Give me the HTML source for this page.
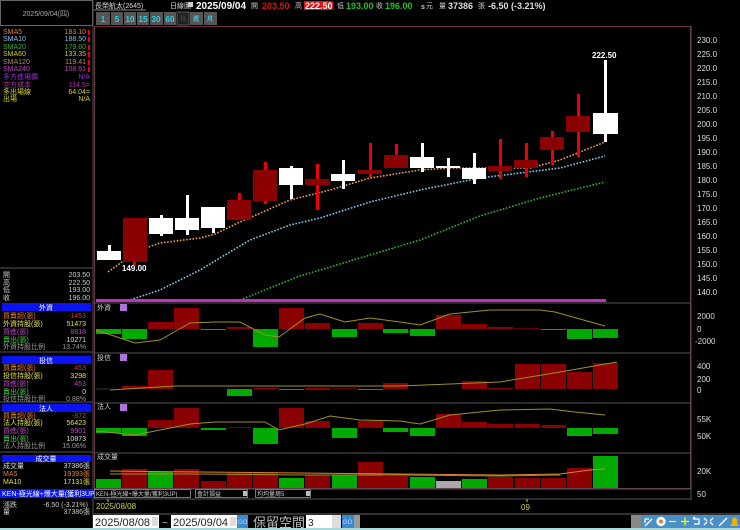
<!DOCTYPE html>
<html><head><meta charset="utf-8"><style>
html,body{margin:0;padding:0;background:#000;width:740px;height:530px;overflow:hidden}
svg{display:block}
text{font-family:"Liberation Sans","Noto Sans CJK TC",sans-serif}
.s{font-size:7px}
.ax{font-size:8px;fill:#ddd}
</style></head><body>
<svg width="740" height="530" viewBox="0 0 740 530" xmlns="http://www.w3.org/2000/svg">
<rect width="740" height="530" fill="#000"/>
<!-- left top date box -->
<rect x="0.5" y="0.5" width="92" height="25" fill="#000" stroke="#666"/>
<text x="46" y="16" class="s" fill="#aaa" text-anchor="middle">2025/09/04(四)</text>
<line x1="93" y1="0" x2="93" y2="530" stroke="#555"/>
<!-- SMA list -->
<g class="s">
<text x="3" y="34" fill="#e08030">SMA5</text><text x="86" y="34" fill="#e08030" text-anchor="end">183.10</text>
<text x="3" y="41" fill="#80c0e0">SMA10</text><text x="86" y="41" fill="#80c0e0" text-anchor="end">188.50</text>
<text x="3" y="49" fill="#30b030">SMA20</text><text x="86" y="49" fill="#30b030" text-anchor="end">179.60</text>
<text x="3" y="56" fill="#d0d020">SMA60</text><text x="86" y="56" fill="#d0d020" text-anchor="end">133.35</text>
<text x="3" y="64" fill="#b09060">SMA120</text><text x="86" y="64" fill="#b09060" text-anchor="end">119.41</text>
<text x="3" y="71" fill="#c040c0">SMA240</text><text x="86" y="71" fill="#c040c0" text-anchor="end">108.61</text>
<text x="3" y="79" fill="#9030d0">多方進場價</text><text x="90" y="79" fill="#9030d0" text-anchor="end">N/A</text>
<text x="3" y="87" fill="#b030b0">空方成本</text><text x="90" y="87" fill="#b030b0" text-anchor="end">114.5=</text>
<text x="3" y="94" fill="#d0d020">多出場線</text><text x="90" y="94" fill="#d0d020" text-anchor="end">64.04=</text>
<text x="3" y="101" fill="#d0d020">出場</text><text x="90" y="101" fill="#d0d020" text-anchor="end">N/A</text>
</g>
<g fill="#e00"><rect x="88" y="30" width="2" height="5"/><rect x="88" y="37" width="2" height="5"/><rect x="88" y="45" width="2" height="5"/><rect x="88" y="52" width="2" height="5"/><rect x="88" y="60" width="2" height="5"/><rect x="88" y="67" width="2" height="5"/></g>
<!-- OHLC -->
<line x1="0" y1="268" x2="93" y2="268" stroke="#555"/>
<g class="s" fill="#ccc">
<text x="3" y="277">開</text><text x="90" y="277" text-anchor="end">203.50</text>
<text x="3" y="285">高</text><text x="90" y="285" text-anchor="end">222.50</text>
<text x="3" y="292">低</text><text x="90" y="292" text-anchor="end">193.00</text>
<text x="3" y="300">收</text><text x="90" y="300" text-anchor="end">196.00</text>
</g>
<!-- foreign -->
<rect x="2" y="303" width="89" height="8" fill="#0a14f0"/>
<text x="46" y="310" class="s" fill="#fff" text-anchor="middle">外資</text>
<g class="s">
<text x="3" y="318" fill="#e08030">買賣超(張)</text><text x="86" y="318" fill="#e03030" text-anchor="end">-1453</text>
<text x="3" y="326" fill="#e0e040">外資持股(張)</text><text x="86" y="326" fill="#e0e040" text-anchor="end">51473</text>
<text x="3" y="334" fill="#c040c0">買進(張)</text><text x="86" y="334" fill="#c040c0" text-anchor="end">8818</text>
<text x="3" y="342" fill="#40d040">賣出(張)</text><text x="86" y="342" fill="#ddd" text-anchor="end">10271</text>
<text x="3" y="349" fill="#999">外資持股比例</text><text x="86" y="349" fill="#999" text-anchor="end">13.74%</text>
</g>
<line x1="0" y1="352" x2="93" y2="352" stroke="#555"/>
<!-- trust -->
<rect x="2" y="356" width="89" height="8" fill="#0a14f0"/>
<text x="46" y="363" class="s" fill="#fff" text-anchor="middle">投信</text>
<g class="s">
<text x="3" y="370" fill="#e08030">買賣超(張)</text><text x="86" y="370" fill="#e03030" text-anchor="end">453</text>
<text x="3" y="378" fill="#e0e040">投信持股(張)</text><text x="86" y="378" fill="#e0e040" text-anchor="end">3298</text>
<text x="3" y="386" fill="#c040c0">買進(張)</text><text x="86" y="386" fill="#c040c0" text-anchor="end">453</text>
<text x="3" y="394" fill="#40d040">賣出(張)</text><text x="86" y="394" fill="#ddd" text-anchor="end">0</text>
<text x="3" y="401" fill="#999">投信持股比例</text><text x="86" y="401" fill="#999" text-anchor="end">0.88%</text>
</g>
<line x1="0" y1="402" x2="93" y2="402" stroke="#555"/>
<!-- inst -->
<rect x="2" y="404" width="89" height="8" fill="#0a14f0"/>
<text x="46" y="411" class="s" fill="#fff" text-anchor="middle">法人</text>
<g class="s">
<text x="3" y="418" fill="#e08030">買賣超(張)</text><text x="86" y="418" fill="#e03030" text-anchor="end">-872</text>
<text x="3" y="425" fill="#e0e040">法人持股(張)</text><text x="86" y="425" fill="#e0e040" text-anchor="end">56423</text>
<text x="3" y="433" fill="#c040c0">買進(張)</text><text x="86" y="433" fill="#c040c0" text-anchor="end">9901</text>
<text x="3" y="441" fill="#40d040">賣出(張)</text><text x="86" y="441" fill="#ddd" text-anchor="end">10873</text>
<text x="3" y="448" fill="#999">法人持股比例</text><text x="86" y="448" fill="#999" text-anchor="end">15.06%</text>
</g>
<line x1="0" y1="452" x2="93" y2="452" stroke="#555"/>
<!-- volume -->
<rect x="2" y="455" width="89" height="7" fill="#0a14f0"/>
<text x="46" y="461" class="s" fill="#fff" text-anchor="middle">成交量</text>
<g class="s">
<text x="3" y="468" fill="#ddd">成交量</text><text x="90" y="468" fill="#ddd" text-anchor="end">37386張</text>
<text x="3" y="476" fill="#e08030">MA5</text><text x="90" y="476" fill="#e08030" text-anchor="end">19393張</text>
<text x="3" y="484" fill="#e0e040">MA10</text><text x="90" y="484" fill="#e0e040" text-anchor="end">17131張</text>
</g>
<rect x="0" y="489" width="93" height="9" fill="#0a14f0"/>
<text x="2" y="496" class="s" fill="#fff">KEN-極光線+爆大量(獲利3UP)</text>
<text x="3" y="507" class="s" fill="#ccc">漲跌</text><text x="88" y="507" class="s" fill="#ccc" text-anchor="end">-6.50 (-3.21%)</text>
<text x="3" y="514" class="s" fill="#ccc">量</text><text x="90" y="514" class="s" fill="#ccc" text-anchor="end">37386張</text>

<!-- header -->
<text x="95" y="8" class="s" fill="#ddd">長榮航太(2645)</text>
<line x1="94" y1="10" x2="146" y2="10" stroke="#888"/>
<text x="170" y="8" class="s" fill="#ddd">日線圖</text>
<rect x="188" y="2" width="5" height="5" fill="#ccc"/>
<text x="196" y="9" font-size="10" font-weight="bold" fill="#fff">2025/09/04</text>
<text x="251" y="8" class="s" fill="#ccc">開</text>
<text x="262" y="9" font-size="9" font-weight="bold" fill="#e01010">203.50</text>
<text x="295" y="8" class="s" fill="#ccc">高</text>
<rect x="304" y="1" width="29" height="9" fill="#e01010"/>
<text x="305" y="9" font-size="9" font-weight="bold" fill="#fff">222.50</text>
<text x="337" y="8" class="s" fill="#ccc">低</text>
<text x="346" y="9" font-size="9" font-weight="bold" fill="#20c020">193.00</text>
<text x="376" y="8" class="s" fill="#ccc">收</text>
<text x="385" y="9" font-size="9" font-weight="bold" fill="#20c020">196.00</text>
<text x="421" y="9" font-size="7" font-weight="bold" fill="#ccc">s</text>
<text x="426" y="8" class="s" fill="#ccc">元</text>
<text x="439" y="8" class="s" fill="#ccc">量</text>
<text x="448" y="9" font-size="9" font-weight="bold" fill="#ddd">37386</text>
<text x="478" y="8" class="s" fill="#ccc">張</text>
<text x="488" y="9" font-size="9" font-weight="bold" fill="#ddd">-6.50 (-3.21%)</text>
<!-- period buttons -->
<g font-size="8" font-weight="bold" fill="#30d0e0" text-anchor="middle">
<rect x="96" y="12" width="14" height="13" fill="#555"/><text x="103" y="22">1</text>
<rect x="111" y="12" width="12" height="13" fill="#555"/><text x="117" y="22">5</text>
<rect x="124" y="12" width="12" height="13" fill="#555"/><text x="130" y="22">10</text>
<rect x="137" y="12" width="12" height="13" fill="#555"/><text x="143" y="22">15</text>
<rect x="150" y="12" width="13" height="13" fill="#555"/><text x="156" y="22">30</text>
<rect x="164" y="12" width="12" height="13" fill="#555"/><text x="170" y="22">60</text>
<rect x="177" y="12" width="12" height="13" fill="#222" stroke="#555"/><text x="183" y="21" font-size="6" fill="#444">日</text>
<rect x="190" y="12" width="13" height="13" fill="#555"/><text x="196" y="21" font-size="6">週</text>
<rect x="204" y="12" width="13" height="13" fill="#555"/><text x="210" y="21" font-size="6">月</text>
</g>
<!-- chart border -->
<rect x="94.5" y="26.5" width="596" height="462" fill="none" stroke="#6a3040"/>
<line x1="691" y1="26" x2="691" y2="500" stroke="#555"/>
<g stroke="#555"><line x1="94" y1="303" x2="691" y2="303"/><line x1="94" y1="353" x2="691" y2="353"/><line x1="94" y1="403" x2="691" y2="403"/><line x1="94" y1="453" x2="691" y2="453"/><line x1="94" y1="489" x2="691" y2="489"/><line x1="94" y1="499" x2="691" y2="499"/></g>
<!-- price axis -->
<g class="ax">
<text x="697" y="43">230.0</text><text x="697" y="57">225.0</text><text x="697" y="71">220.0</text><text x="697" y="85">215.0</text><text x="697" y="99">210.0</text><text x="697" y="113">205.0</text><text x="697" y="127">200.0</text><text x="697" y="141">195.0</text><text x="697" y="155">190.0</text><text x="697" y="169">185.0</text><text x="697" y="183">180.0</text><text x="697" y="197">175.0</text><text x="697" y="211">170.0</text><text x="697" y="225">165.0</text><text x="697" y="239">160.0</text><text x="697" y="253">155.0</text><text x="697" y="267">150.0</text><text x="697" y="281">145.0</text><text x="697" y="295">140.0</text>
<text x="697" y="319">2000</text><text x="697" y="332">0</text><text x="695" y="344">-2000</text>
<text x="697" y="369">400</text><text x="697" y="382">200</text><text x="697" y="393">0</text>
<text x="697" y="422">55K</text><text x="697" y="439">50K</text>
<text x="697" y="474">20K</text><text x="697" y="497">50</text>
</g>
<!-- MAs -->
<g fill="none" stroke-width="1.6" stroke-dasharray="1.6 1.6">
<polyline stroke="#30b030" points="240,300 300,276 370,255 420,240 480,216 540,198 605,182"/>
<polyline stroke="#80c8e8" points="105,301 130,300 160,290 200,270 250,240 290,225 320,218 370,202 420,190 480,178 560,168 605,156"/>
<polyline stroke="#f0a040" points="108,272 122,262 140,250 160,243 200,238 215,234 240,222 290,200 330,190 370,178 420,170 450,168 530,168 560,160 605,142"/>
</g>
<rect x="96" y="299" width="510" height="3" fill="#c030c0"/>
<!-- candles -->
<g>
<rect x="108" y="245" width="3" height="15" fill="#fff"/><rect x="97" y="251" width="24" height="9" fill="#fff"/>
<rect x="133" y="218" width="3" height="47" fill="#e00"/><rect x="123" y="218" width="24" height="44" fill="#8b0000"/>
<rect x="160" y="215" width="3" height="21" fill="#fff"/><rect x="149" y="218" width="24" height="16" fill="#fff"/>
<rect x="186" y="195" width="3" height="40" fill="#fff"/><rect x="175" y="218" width="24" height="12" fill="#fff"/>
<rect x="212" y="207" width="3" height="26" fill="#fff"/><rect x="201" y="207" width="24" height="21" fill="#fff"/>
<rect x="238" y="193" width="3" height="27" fill="#e00"/><rect x="227" y="200" width="24" height="20" fill="#8b0000"/>
<rect x="264" y="162" width="3" height="42" fill="#e00"/><rect x="253" y="170" width="24" height="31" fill="#8b0000"/>
<rect x="290" y="166" width="3" height="33" fill="#fff"/><rect x="279" y="168" width="24" height="17" fill="#fff"/>
<rect x="316" y="164" width="3" height="46" fill="#e00"/><rect x="305" y="179" width="24" height="6" fill="#8b0000"/>
<rect x="342" y="160" width="3" height="29" fill="#fff"/><rect x="331" y="174" width="24" height="7" fill="#fff"/>
<rect x="369" y="143" width="3" height="34" fill="#e00"/><rect x="358" y="170" width="24" height="4" fill="#8b0000"/>
<rect x="395" y="144" width="3" height="24" fill="#e00"/><rect x="384" y="155" width="24" height="13" fill="#8b0000"/>
<rect x="421" y="143" width="3" height="29" fill="#fff"/><rect x="410" y="157" width="24" height="11" fill="#fff"/>
<rect x="447" y="158" width="3" height="19" fill="#fff"/><rect x="436" y="166" width="24" height="2" fill="#fff"/>
<rect x="473" y="153" width="3" height="31" fill="#fff"/><rect x="462" y="168" width="24" height="11" fill="#fff"/>
<rect x="499" y="139" width="3" height="40" fill="#e00"/><rect x="488" y="166" width="24" height="5" fill="#8b0000"/>
<rect x="525" y="143" width="3" height="34" fill="#e00"/><rect x="514" y="160" width="24" height="8" fill="#8b0000"/>
<rect x="551" y="131" width="3" height="34" fill="#e00"/><rect x="540" y="137" width="24" height="13" fill="#8b0000"/>
<rect x="577" y="94" width="3" height="63" fill="#e00"/><rect x="566" y="116" width="24" height="16" fill="#8b0000"/>
<rect x="604" y="60" width="3" height="82" fill="#fff"/><rect x="593" y="113" width="25" height="21" fill="#fff"/>
</g>
<text x="122" y="271" font-size="8" font-weight="bold" fill="#fff">149.00</text>
<text x="592" y="58" font-size="8" font-weight="bold" fill="#fff">222.50</text>
<!-- panel labels -->
<g class="s" fill="#ccc"><text x="97" y="310">外資</text><text x="97" y="360">投信</text><text x="97" y="409">法人</text><text x="97" y="459">成交量</text></g>
<g fill="#b070e0"><rect x="120" y="304" width="7" height="7"/><rect x="120" y="354" width="7" height="7"/><rect x="120" y="404" width="7" height="7"/></g>
<!-- foreign bars -->
<g>
<rect x="96" y="329" width="25" height="5" fill="#0a0"/><rect x="122" y="329" width="25" height="10" fill="#0a0"/>
<rect x="148" y="322" width="25" height="7" fill="#8b0000"/><rect x="174" y="308" width="25" height="21" fill="#8b0000"/>
<rect x="201" y="329" width="25" height="1" fill="#0a0"/><rect x="227" y="327" width="25" height="2" fill="#8b0000"/>
<rect x="253" y="329" width="25" height="18" fill="#0a0"/><rect x="279" y="308" width="25" height="21" fill="#8b0000"/>
<rect x="305" y="323" width="25" height="6" fill="#8b0000"/><rect x="332" y="329" width="25" height="8" fill="#0a0"/>
<rect x="358" y="323" width="25" height="6" fill="#8b0000"/><rect x="383" y="329" width="25" height="4" fill="#0a0"/>
<rect x="410" y="329" width="25" height="7" fill="#0a0"/><rect x="436" y="315" width="25" height="14" fill="#8b0000"/>
<rect x="462" y="324" width="25" height="5" fill="#8b0000"/><rect x="488" y="327" width="25" height="2" fill="#8b0000"/>
<rect x="515" y="328" width="25" height="1" fill="#600"/><rect x="541" y="329" width="25" height="1" fill="#0a0"/>
<rect x="567" y="329" width="25" height="10" fill="#0a0"/><rect x="593" y="329" width="25" height="9" fill="#0a0"/>
</g>
<polyline fill="none" stroke="#a09020" stroke-width="1" points="96,330 135,343 160,340 190,323 215,322 240,322 265,335 279,337 305,318 320,314 345,322 370,318 400,322 420,325 450,314 490,310 540,310 555,312 605,326"/>
<!-- trust bars -->
<g>
<rect x="122" y="386" width="25" height="3" fill="#8b0000"/><rect x="148" y="370" width="25" height="19" fill="#8b0000"/>
<rect x="227" y="389" width="25" height="7" fill="#0a0"/><rect x="253" y="388" width="25" height="1" fill="#8b0000"/>
<rect x="279" y="389" width="25" height="1" fill="#0a0"/><rect x="305" y="388" width="25" height="2" fill="#8b0000"/>
<rect x="332" y="388" width="25" height="1" fill="#600"/><rect x="358" y="389" width="25" height="1" fill="#0a0"/>
<rect x="383" y="383" width="25" height="6" fill="#8b0000"/><rect x="462" y="381" width="25" height="8" fill="#8b0000"/>
<rect x="488" y="388" width="25" height="1" fill="#8b0000"/><rect x="515" y="364" width="25" height="25" fill="#8b0000"/>
<rect x="541" y="364" width="25" height="25" fill="#8b0000"/><rect x="567" y="372" width="25" height="17" fill="#8b0000"/>
<rect x="593" y="363" width="25" height="26" fill="#8b0000"/>
</g>
<polyline fill="none" stroke="#a09020" stroke-width="1" points="110,390 175,386 240,386 300,386 400,386 500,382 560,372 600,365 617,362"/>
<line x1="96" y1="389" x2="110" y2="389" stroke="#333"/>
<!-- inst bars -->
<g>
<rect x="96" y="428" width="25" height="5" fill="#0a0"/><rect x="122" y="428" width="25" height="8" fill="#0a0"/>
<rect x="148" y="420" width="25" height="8" fill="#8b0000"/><rect x="174" y="408" width="25" height="20" fill="#8b0000"/>
<rect x="201" y="428" width="25" height="2" fill="#0a0"/><rect x="227" y="427" width="25" height="1" fill="#600"/>
<rect x="253" y="428" width="25" height="16" fill="#0a0"/><rect x="279" y="408" width="25" height="20" fill="#8b0000"/>
<rect x="305" y="421" width="25" height="7" fill="#8b0000"/><rect x="332" y="428" width="25" height="10" fill="#0a0"/>
<rect x="358" y="421" width="25" height="7" fill="#8b0000"/><rect x="383" y="428" width="25" height="4" fill="#0a0"/>
<rect x="410" y="428" width="25" height="8" fill="#0a0"/><rect x="436" y="414" width="25" height="14" fill="#8b0000"/>
<rect x="462" y="422" width="25" height="6" fill="#8b0000"/><rect x="488" y="424" width="25" height="4" fill="#8b0000"/>
<rect x="515" y="424" width="25" height="4" fill="#8b0000"/><rect x="541" y="425" width="25" height="3" fill="#8b0000"/>
<rect x="567" y="428" width="25" height="8" fill="#0a0"/><rect x="593" y="428" width="25" height="6" fill="#0a0"/>
</g>
<polyline fill="none" stroke="#a09020" stroke-width="1" points="96,431 135,435 190,424 215,422 265,422 279,430 305,424 330,416 360,420 400,421 420,424 450,415 500,410 550,409 575,412 605,415"/>
<!-- volume bars -->
<g>
<rect x="96" y="479" width="25" height="9" fill="#0a0"/><rect x="122" y="469" width="25" height="19" fill="#8b0000"/>
<rect x="148" y="472" width="25" height="16" fill="#0a0"/><rect x="174" y="469" width="25" height="19" fill="#8b0000"/>
<rect x="201" y="481" width="25" height="7" fill="#8b0000"/><rect x="227" y="473" width="25" height="15" fill="#8b0000"/>
<rect x="253" y="473" width="25" height="15" fill="#8b0000"/><rect x="279" y="478" width="25" height="10" fill="#0a0"/>
<rect x="305" y="475" width="25" height="13" fill="#8b0000"/><rect x="332" y="475" width="25" height="13" fill="#0a0"/>
<rect x="358" y="462" width="25" height="26" fill="#8b0000"/><rect x="383" y="476" width="25" height="12" fill="#8b0000"/>
<rect x="410" y="477" width="25" height="11" fill="#0a0"/><rect x="436" y="481" width="25" height="7" fill="#aaa"/>
<rect x="462" y="479" width="25" height="9" fill="#0a0"/><rect x="488" y="477" width="25" height="11" fill="#8b0000"/>
<rect x="515" y="478" width="25" height="10" fill="#8b0000"/><rect x="541" y="478" width="25" height="10" fill="#8b0000"/>
<rect x="567" y="468" width="25" height="20" fill="#8b0000"/><rect x="593" y="456" width="25" height="32" fill="#0a0"/>
</g>
<polyline fill="none" stroke="#e08030" stroke-width="1" points="110,471 200,472 300,473 400,474 500,475 560,474 590,470 605,469"/>
<polyline fill="none" stroke="#a09020" stroke-width="1" points="110,474 200,474 300,475 400,475 500,476 560,475"/>
<!-- dropdown row -->
<rect x="94.5" y="489.5" width="96" height="8" fill="#000" stroke="#777"/>
<text x="96" y="496" font-size="6" fill="#ccc">KEN-極光線+爆大量(獲利3UP)</text>
<rect x="195.5" y="489.5" width="52" height="8" fill="#000" stroke="#777"/>
<text x="197" y="496" font-size="6" fill="#ccc">會計損益</text><rect x="243" y="491" width="4" height="5" fill="#bbb"/>
<rect x="255.5" y="489.5" width="55" height="8" fill="#000" stroke="#777"/>
<text x="257" y="496" font-size="6" fill="#ccc">均均量周5</text><rect x="306" y="491" width="4" height="5" fill="#bbb"/>
<text x="96" y="509" font-size="8" fill="#d0d040">2025/08/08</text>
<line x1="108" y1="499" x2="108" y2="502" stroke="#d0d040"/>
<line x1="527" y1="499" x2="527" y2="502" stroke="#d0d040"/>
<text x="521" y="510" font-size="8" fill="#d0d040">09</text>
<line x1="94" y1="514" x2="740" y2="514" stroke="#666"/>
<!-- date inputs -->
<rect x="93" y="515" width="66" height="13" fill="#fff"/>
<text x="95" y="526" font-size="11" fill="#222">2025/08/08</text><rect x="152" y="517" width="6" height="9" fill="#ddd"/>
<text x="162" y="526" font-size="10" fill="#ccc">~</text>
<rect x="171" y="515" width="66" height="13" fill="#fff"/>
<text x="173" y="526" font-size="11" fill="#222">2025/09/04</text><rect x="230" y="517" width="6" height="9" fill="#ddd"/>
<rect x="237" y="515" width="11" height="13" fill="#3a8ad0"/><text x="238" y="524" font-size="6" fill="#ccf">GO</text>
<text x="253" y="527" font-size="13" fill="#bbb">保留空間</text>
<rect x="306" y="515" width="26" height="13" fill="#fff"/><text x="308" y="526" font-size="10" fill="#222">3</text>
<rect x="332" y="515" width="9" height="13" fill="#ddd"/>
<rect x="342" y="515" width="12" height="13" fill="#3a8ad0"/><text x="343" y="524" font-size="6" fill="#ccf">GO</text>
<rect x="354" y="515" width="6" height="13" fill="#999"/>
<!-- toolbar -->
<rect x="631" y="515" width="10" height="13" fill="#888"/>
<rect x="641" y="515" width="99" height="13" fill="#4a90c8"/>
<g stroke="#fff" stroke-width="1.3" fill="none">
<path d="M645 526 L652 519 M645 519 L645 523 M645 519 L649 519"/>
<circle cx="661" cy="521.5" r="4" fill="#fff"/>
<path d="M669 521.5 H676" stroke="#ff0"/>
<path d="M681 521.5 H689 M685 517.5 V525.5" stroke="#ff0"/>
<path d="M693 519 H699 V524 H694 M693 519 L695 517"/>
<path d="M704 518 L707 521 M713 518 L710 521 M704 525 L707 522 M713 525 L710 522"/>
<path d="M719 526 L727 518"/>
</g>
<circle cx="661" cy="521.5" r="2" fill="#e08030"/>
<path d="M730 526 H739 L737 523 V520 A2.5 2.5 0 0 0 732 520 V523 Z" fill="#f0b000"/>
<rect x="0" y="528" width="740" height="2" fill="#a8d8d8"/>
</svg>
</body></html>
